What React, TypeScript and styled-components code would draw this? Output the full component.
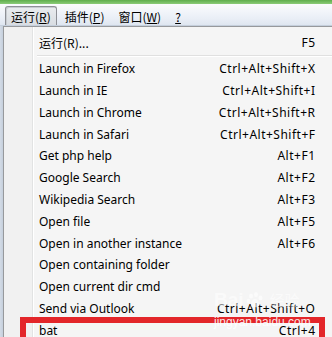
import React from 'react'
import styled, { createGlobalStyle } from 'styled-components'

const GlobalStyle = createGlobalStyle`
  html, body {
    margin: 0;
    padding: 0;
    background: #f0f0f0;
    overflow: hidden;
  }
  body {
    font-family: "Noto Sans", "Noto Sans CJK SC", sans-serif;
    font-size: 12px;
    color: #111;
  }
`

const Screen = styled.div`
  position: relative;
  width: 332px;
  height: 337px;
  overflow: hidden;
  display: flex;
  flex-direction: column;
  background: #f0f0f0;
`

const TitleStrip = styled.div`
  height: 4px;
  background: linear-gradient(#5fae4c, #8bcc78);
  flex: none;
`

const MenuBar = styled.div`
  height: 21px;
  flex: none;
  display: flex;
  align-items: stretch;
  padding-left: 5px;
  gap: 2px;
  background: linear-gradient(#fbfcfe, #e9eef6 70%, #dfe6f0);
  border-bottom: 1px solid #c5cfdc;
`

const BarItem = styled.div<{ $open?: boolean }>`
  display: flex;
  align-items: center;
  padding: 0 5px;
  margin-top: 2px;
  font-family: "Noto Sans CJK SC", sans-serif;
  font-size: 12px;
  color: #000;
  border: 1px solid ${(p) => (p.$open ? '#8e9096' : 'transparent')};
  border-bottom: none;
  border-radius: 3px 3px 0 0;
  background: ${(p) => (p.$open ? 'linear-gradient(#e9ecef, #d9dde2)' : 'transparent')};
  box-shadow: ${(p) => (p.$open ? 'inset 1px 1px 0 #c7cbd0' : 'none')};
  u { text-decoration-thickness: 1px; text-underline-offset: 1px; }
`

const Body = styled.div`
  flex: 1;
  display: flex;
  min-height: 0;
`

const SideStrip = styled.div`
  width: 3px;
  flex: none;
  background: linear-gradient(90deg, #d3dbe6, #c5cfdc);
`

const Menu = styled.div`
  flex: 1;
  display: flex;
  flex-direction: column;
  padding: 5px 0 0 1px;
  border-left: 1px solid #97999c;
  border-top: 1px solid #97999c;
  background: linear-gradient(90deg, #f1f1f1 0, #f1f1f1 28px, #e2e3e3 28px, #e2e3e3 29px, #ffffff 29px, #ffffff 30px, #f5f5f5 30px);
`

const Item = styled.div`
  height: 21.8px;
  flex: none;
  display: flex;
  align-items: center;
  justify-content: space-between;
  padding: 0 17px 0 34px;
  white-space: nowrap;
  color: #000;
`

const Label = styled.span<{ $cjk?: boolean }>`
  font-family: ${(p) => (p.$cjk ? '"Noto Sans CJK SC", sans-serif' : '"Noto Sans", sans-serif')};
`

const Shortcut = styled.span`
  font-family: "Noto Sans", sans-serif;
  letter-spacing: 0.5px;
  margin-right: -0.5px;
`

const Separator = styled.div`
  height: 4px;
  flex: none;
  margin-left: 32px;
  display: flex;
  flex-direction: column;
  justify-content: center;
  &::before {
    content: '';
    height: 1px;
    background: #e0e0e0;
  }
  &::after {
    content: '';
    height: 1px;
    background: #ffffff;
  }
`

const Highlight = styled.div`
  position: absolute;
  left: 20px;
  top: 317px;
  width: 305px;
  height: 30px;
  box-sizing: border-box;
  border: 6px solid #e3262a;
  border-bottom: none;
`

const Watermark = styled.div`
  position: absolute;
  left: 214px;
  top: 289px;
  display: flex;
  flex-direction: column;
  align-items: flex-start;
  pointer-events: none;
`

const MarkTop = styled.div`
  display: flex;
  align-items: center;
  gap: 2px;
  font-family: "Liberation Sans", sans-serif;
  font-size: 19px;
  font-weight: bold;
  line-height: 22px;
  color: rgba(255, 255, 255, 0.55);
  span.cn {
    margin-left: 4px;
    font-family: "Noto Sans CJK SC", sans-serif;
    font-size: 15px;
    font-weight: normal;
  }
`

const MarkUrl = styled.div`
  font-family: "Liberation Sans", sans-serif;
  font-size: 12px;
  line-height: 12px;
  margin-top: 5px;
  color: rgba(255, 255, 255, 0.9);
`

const items: [string, string][] = [
  ['Launch in Firefox', 'Ctrl+Alt+Shift+X'],
  ['Launch in IE', 'Ctrl+Alt+Shift+I'],
  ['Launch in Chrome', 'Ctrl+Alt+Shift+R'],
  ['Launch in Safari', 'Ctrl+Alt+Shift+F'],
  ['Get php help', 'Alt+F1'],
  ['Google Search', 'Alt+F2'],
  ['Wikipedia Search', 'Alt+F3'],
  ['Open file', 'Alt+F5'],
  ['Open in another instance', 'Alt+F6'],
  ['Open containing folder', ''],
  ['Open current dir cmd', ''],
  ['Send via Outlook', 'Ctrl+Alt+Shift+O'],
  ['bat', 'Ctrl+4'],
]

const Paw = () => (
  <svg width="18" height="18" viewBox="0 0 18 18">
    <g fill="rgba(255,255,255,0.6)">
      <ellipse cx="5" cy="5" rx="2" ry="2.6" />
      <ellipse cx="10" cy="3.5" rx="2" ry="2.6" />
      <ellipse cx="14.5" cy="7" rx="2" ry="2.4" />
      <ellipse cx="2.5" cy="10" rx="1.8" ry="2.2" />
      <path d="M9 8c3 0 5 5 4 7s-3 1-4 1-3 1-4-1 1-7 4-7z" />
    </g>
  </svg>
)

export default function App() {
  return (
    <>
      <GlobalStyle />
      <Screen>
        <TitleStrip />
        <MenuBar>
          <BarItem $open>
            运行(<u>R</u>)
          </BarItem>
          <BarItem>
            插件(<u>P</u>)
          </BarItem>
          <BarItem>
            窗口(<u>W</u>)
          </BarItem>
          <BarItem>
            <u>?</u>
          </BarItem>
        </MenuBar>
        <Body>
          <SideStrip />
          <Menu>
            <Item>
              <Label $cjk>运行(R)...</Label>
              <Shortcut>F5</Shortcut>
            </Item>
            <Separator />
            {items.map(([label, key]) => (
              <Item key={label}>
                <Label>{label}</Label>
                <Shortcut>{key}</Shortcut>
              </Item>
            ))}
          </Menu>
        </Body>
        <Highlight />
        <Watermark>
          <MarkTop>
            Bai<Paw />
            <span className="cn">经验</span>
          </MarkTop>
          <MarkUrl>jingyan.baidu.com</MarkUrl>
        </Watermark>
      </Screen>
    </>
  )
}
